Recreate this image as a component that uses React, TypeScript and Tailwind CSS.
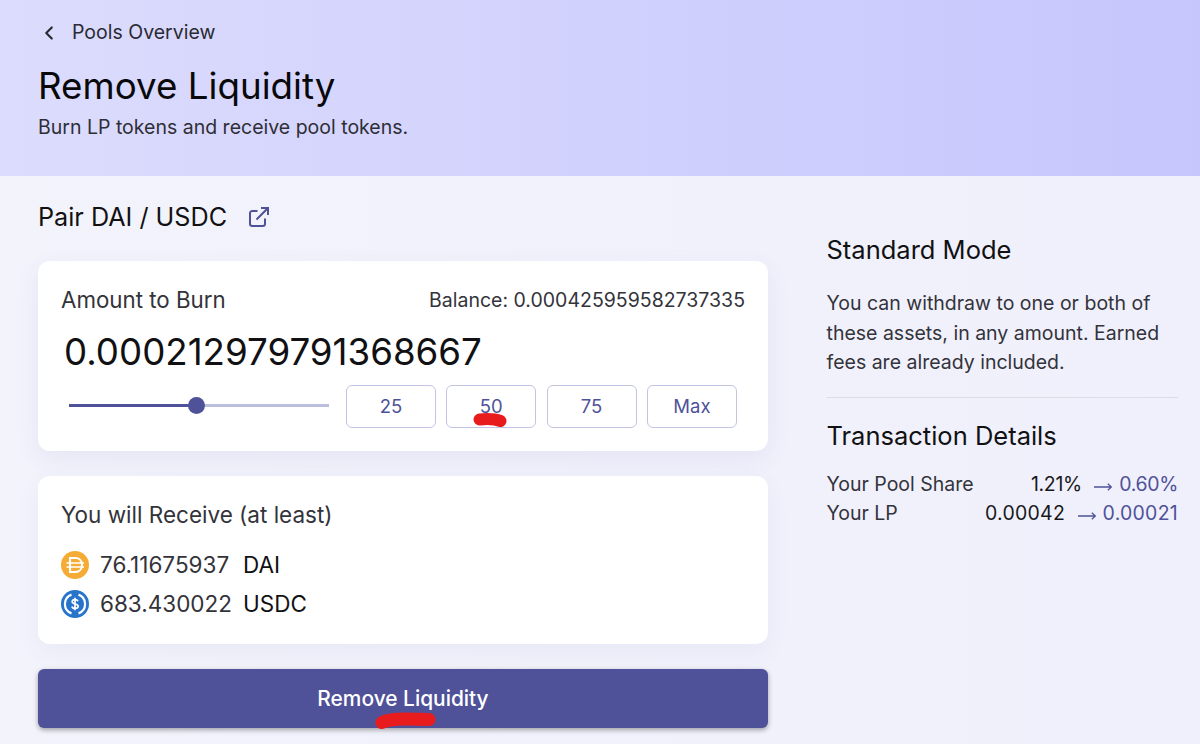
import { ChevronLeft } from "lucide-react";

function PercentButton({ label, mark }: { label: string; mark?: boolean }) {
  return (
    <div className="relative flex h-[43px] w-[90px] items-center justify-center rounded-md border border-[#c3c4e2] text-[18.500px] text-[#4f5298]">
      {label}
      {mark && (
        <svg className="pointer-events-none absolute left-[26px] top-[27px] h-[15px] w-[34px]" viewBox="0 0 34 15" fill="none">
          <path d="M6.500 6.500 C 12 6, 22 6, 27.500 8" stroke="#e81c1c" strokeWidth="12" strokeLinecap="round" />
        </svg>
      )}
    </div>
  );
}

function DaiIcon() {
  return (
    <svg width="28" height="28" viewBox="0 0 28 28" className="shrink-0">
      <circle cx="14" cy="14" r="14" fill="#f5ac37" />
      <path d="M9 7h5.500c3.800 0 6.500 2.900 6.500 7s-2.700 7-6.500 7H9z" fill="none" stroke="#fff" strokeWidth="2.100" />
      <path d="M5.500 12h17.500M5.500 16h17.500" stroke="#fff" strokeWidth="1.700" />
    </svg>
  );
}

function UsdcIcon() {
  return (
    <svg width="28" height="28" viewBox="0 0 28 28" className="shrink-0">
      <circle cx="14" cy="14" r="14" fill="#2775ca" />
      <path d="M10.500 4.600a10 10 0 0 0 0 18.800M17.500 4.600a10 10 0 0 1 0 18.800" fill="none" stroke="#fff" strokeWidth="2.200" />
      <path d="M17 11.200c-.4-1-1.400-1.600-3-1.600-1.700 0-2.800.9-2.800 2.100 0 3 6 1.500 6 4.500 0 1.300-1.300 2.200-3.200 2.200-1.700 0-2.800-.7-3.100-1.900M14 7.800v12.400" fill="none" stroke="#fff" strokeWidth="1.700" />
    </svg>
  );
}

function LinkIcon() {
  return (
    <svg width="20" height="20" viewBox="0 0 20 20" fill="none" stroke="#4f5298" strokeWidth="2" className="ml-[22px] mt-[6px] shrink-0">
      <path d="M8.500 4H3.200A2.200 2.200 0 0 0 1 6.200v10.600A2.200 2.200 0 0 0 3.200 19h10.600a2.200 2.200 0 0 0 2.200-2.200v-5.300" />
      <path d="M7.500 12.500 18.500 1.500M12 1h7v7" />
    </svg>
  );
}

function ThinArrow() {
  return (
    <svg width="18" height="8" viewBox="0 0 18 8" fill="none" stroke="#4f5298" strokeWidth="1.300" className="mr-[7px] mt-[4px] shrink-0">
      <path d="M0 4h17.200M13.800 .7 17.400 4l-3.600 3.300" />
    </svg>
  );
}

function DetailRow({ label, from, to, valueClass }: { label: string; from: string; to: string; valueClass: string }) {
  return (
    <div className="flex h-[29px] items-center justify-between text-[19.500px] text-[#33333a]">
      <span>{label}</span>
      <span className={`flex items-center ${valueClass}`}>
        <span className="text-[#18181b]">{from}</span>
        <span className="ml-[12.500px] flex items-center text-[#4f5298]">
          <ThinArrow />
          {to}
        </span>
      </span>
    </div>
  );
}

function TokenRow({ icon, amount, symbol }: { icon: React.ReactNode; amount: string; symbol: string }) {
  return (
    <div className="flex h-[39px] items-center text-[22.500px]">
      {icon}
      <span className="ml-[11px] w-[132px] text-[#33333a]">{amount}</span>
      <span className="ml-[11px] text-[#111113]">{symbol}</span>
    </div>
  );
}

export default function App() {
  return (
    <div className="h-[744px] w-[1200px] overflow-hidden bg-gradient-to-r from-[#f3f3fc] to-[#f0f0fc] font-['Inter',sans-serif] text-[#111113]">
      <header className="h-[176px] bg-gradient-to-r from-[#dcdcfd] to-[#c6c6fd] pl-[38px] pt-[19px]">
        <div className="flex h-[28px] items-center text-[19.500px] text-[#2a2a33]">
          <ChevronLeft className="mr-[12px] h-[22px] w-[22px]" strokeWidth={2.400} />
          Pools Overview
        </div>
        <h1 className="mt-[16px] text-[36.750px] leading-[46px] text-[#09090b]">Remove Liquidity</h1>
        <p className="mt-[5px] text-[19.500px] leading-[26px] text-[#2e2e36]">Burn LP tokens and receive pool tokens.</p>
      </header>

      <div className="flex pl-[38px]">
        <main className="w-[730px]">
          <div className="flex h-[85px] items-start pt-[25px]">
            <span className="text-[25.200px] leading-[32px] text-[#111113]">Pair DAI / USDC</span>
            <LinkIcon />
          </div>

          <section className="h-[190px] rounded-xl bg-white px-[23px] pt-[25px] shadow-[0_8px_24px_rgba(79,82,152,0.08)]">
            <div className="flex items-center justify-between">
              <span className="text-[22.300px] leading-[28px] text-[#33333a]">Amount to Burn</span>
              <span className="text-[19.500px] leading-[26px] text-[#33333a]">Balance: 0.000425959582737335</span>
            </div>
            <div className="mt-[15px] pl-[3px] text-[36.700px] leading-[46px] text-[#111113]">0.000212979791368667</div>
            <div className="mt-[10px] flex items-center">
              <div className="relative mb-[2px] ml-[8px] h-[3px] w-[260px] bg-[#bcbede]">
                <div className="h-full w-[127px] bg-[#4f5298]" />
                <div className="absolute left-[119px] top-[-7px] h-[17px] w-[17px] rounded-full bg-[#4f5298]" />
              </div>
              <div className="ml-[17px] flex gap-[10.300px]">
                <PercentButton label="25" />
                <PercentButton label="50" mark />
                <PercentButton label="75" />
                <PercentButton label="Max" />
              </div>
            </div>
          </section>

          <section className="mt-[25px] h-[168px] rounded-xl bg-white px-[23px] pt-[25px] shadow-[0_8px_24px_rgba(79,82,152,0.06)]">
            <div className="text-[22.500px] leading-[28px] text-[#33333a]">You will Receive (at least)</div>
            <div className="mt-[16px]">
              <TokenRow icon={<DaiIcon />} amount="76.11675937" symbol="DAI" />
              <TokenRow icon={<UsdcIcon />} amount="683.430022" symbol="USDC" />
            </div>
          </section>

          <button className="relative mt-[25px] flex h-[59px] w-full items-center justify-center rounded-md bg-[#4f5298] text-[20.900px] font-medium text-white shadow-[0_2px_5px_rgba(0,0,0,0.35)]">
            Remove Liquidity
            <svg className="pointer-events-none absolute left-[337px] top-[43px] h-[18px] w-[61px]" viewBox="0 0 61 18" fill="none">
              <path d="M7 10.500 C 13 7.500, 20 7, 30 7 L 54 7.500" stroke="#e81c1c" strokeWidth="13" strokeLinecap="round" />
            </svg>
          </button>
        </main>

        <aside className="ml-[58.500px] w-[351.500px] pt-[58px]">
          <h2 className="text-[25.500px] leading-[32px] text-[#111113]">Standard Mode</h2>
          <p className="mt-[23px] pb-[19px] text-[19.500px] leading-[29.500px] text-[#33333a]">
            You can withdraw to one or both of these assets, in any amount. Earned fees are already included.
          </p>
          <div className="border-t border-[#dcdce6] pt-[22px]">
            <h2 className="text-[25.500px] leading-[32px] text-[#111113]">Transaction Details</h2>
            <div className="mt-[19px]">
              <DetailRow label="Your Pool Share" from="1.21%" to="0.60%" valueClass="tracking-[-0.35px]" />
              <DetailRow label="Your LP" from="0.00042" to="0.00021" valueClass="tracking-[0.25px]" />
            </div>
          </div>
        </aside>
      </div>
    </div>
  );
}
